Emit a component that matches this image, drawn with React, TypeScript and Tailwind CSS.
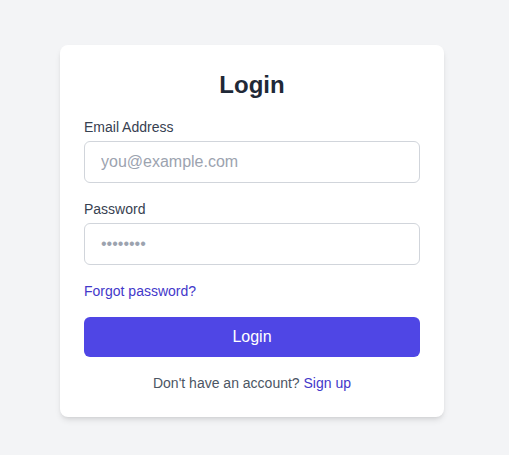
export default function App() {
  return (
    <div className="min-h-screen w-full bg-[#f3f4f6] pt-[45px] pl-[60px] font-['Liberation_Sans',Arial,sans-serif]">
      <div className="w-96 rounded-lg bg-white p-6 shadow-md">
        <h1 className="mb-4 text-center text-2xl font-bold text-[#1f2937]">Login</h1>
        <form className="flex flex-col" onSubmit={(e) => e.preventDefault()}>
          <label className="mb-1 block text-sm text-[#374151]">Email Address</label>
          <input
            type="email"
            placeholder="you@example.com"
            className="mb-4 w-full rounded-md border border-[#d1d5db] px-4 py-2 text-base text-[#1f2937] placeholder-[#9ca3af] outline-none"
          />
          <label className="mb-1 block text-sm text-[#374151]">Password</label>
          <input
            type="password"
            placeholder="••••••••"
            className="mb-4 w-full rounded-md border border-[#d1d5db] px-4 py-2 text-base text-[#1f2937] placeholder-[#9ca3af] outline-none"
          />
          <a href="#" className="mb-4 text-sm text-[#4338ca]">
            Forgot password?
          </a>
          <button
            type="submit"
            className="w-full rounded-md bg-[#4f46e5] py-2 text-base text-white"
          >
            Login
          </button>
          <p className="mt-4 text-center text-sm text-[#4b5563]">
            Don't have an account?{" "}
            <a href="#" className="text-[#4338ca]">
              Sign up
            </a>
          </p>
        </form>
      </div>
    </div>
  );
}
